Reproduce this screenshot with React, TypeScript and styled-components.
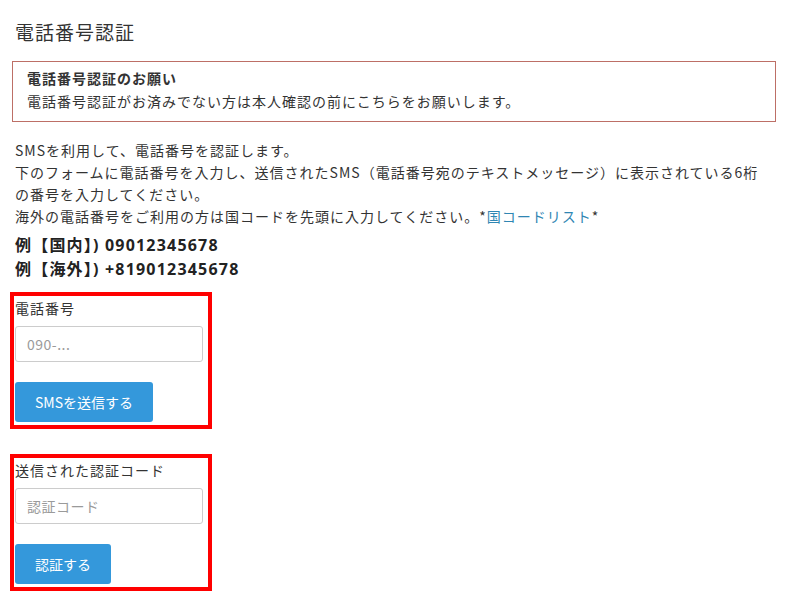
import React from 'react'
import styled, { createGlobalStyle } from 'styled-components'

const GlobalStyle = createGlobalStyle`
  body {
    margin: 0;
    background: #fff;
    color: #333;
    font-family: 'Noto Sans CJK JP', 'Noto Sans', sans-serif;
  }
`

const Page = styled.div`
  width: 766px;
  padding: 17px 0 0 10px;
`

const Title = styled.h1`
  margin: 0 0 14px;
  padding-left: 5px;
  font-size: 19px;
  letter-spacing: 1px;
  font-weight: 400;
  line-height: 30px;
  color: #333;
`

const Alert = styled.div`
  margin-left: 2px;
  border: 1px solid #bd6f66;
  padding: 5px 14px 8px;
  font-size: 14px;
  letter-spacing: 1px;
  line-height: 23px;

  strong {
    display: block;
    font-weight: 700;
  }
`

const Intro = styled.p`
  margin: 17px 0 0;
  padding-left: 5px;
  width: 755px;
  font-size: 14px;
  letter-spacing: 1px;
  line-height: 22px;

  a {
    color: #2f86b3;
    text-decoration: none;
  }
`

const Examples = styled.div`
  margin: 6px 0 11px;
  padding-left: 5px;
  font-family: 'Open Sans', 'Noto Sans CJK JP', sans-serif;
  font-size: 16px;
  font-weight: 700;
  letter-spacing: 1.2px;
  line-height: 24px;
  color: #222;
`

const FormGroup = styled.div<{ gap?: number }>`
  box-sizing: border-box;
  width: 202px;
  border: 4px solid #ff0000;
  padding: 2px 5px 3px 1px;
  margin-top: ${p => p.gap ?? 0}px;
  display: flex;
  flex-direction: column;
  align-items: flex-start;
`

const Label = styled.label`
  font-size: 14px;
  letter-spacing: 1px;
  line-height: 20px;
  color: #333;
`

const Input = styled.input`
  box-sizing: border-box;
  width: 188px;
  height: 36px;
  margin-top: 8px;
  padding: 0 11px;
  border: 1px solid #ccc;
  border-radius: 3px;
  font-family: inherit;
  font-size: 14px;
  letter-spacing: 0.5px;
  color: #333;
  outline: none;

  &::placeholder {
    color: #9a9a9a;
  }
`

const Button = styled.button`
  height: 40px;
  margin-top: 20px;
  padding: 0 20px;
  border: none;
  border-radius: 3px;
  background: #3498db;
  color: #fff;
  font-family: inherit;
  font-size: 14px;
  cursor: pointer;
`

export default function App() {
  return (
    <>
      <GlobalStyle />
      <Page>
        <Title>電話番号認証</Title>
        <Alert>
          <strong>電話番号認証のお願い</strong>
          電話番号認証がお済みでない方は本人確認の前にこちらをお願いします。
        </Alert>
        <Intro>
          SMSを利用して、電話番号を認証します。
          <br />
          下のフォームに電話番号を入力し、送信されたSMS（電話番号宛のテキストメッセージ）に表示されている6桁の番号を入力してください。
          <br />
          海外の電話番号をご利用の方は国コードを先頭に入力してください。*<a href="#">国コードリスト</a>*
        </Intro>
        <Examples>
          <div>例【国内】) 09012345678</div>
          <div>例【海外】) +819012345678</div>
        </Examples>
        <FormGroup>
          <Label>電話番号</Label>
          <Input placeholder="090-..." />
          <Button>SMSを送信する</Button>
        </FormGroup>
        <FormGroup gap={25}>
          <Label>送信された認証コード</Label>
          <Input placeholder="認証コード" />
          <Button>認証する</Button>
        </FormGroup>
      </Page>
    </>
  )
}
